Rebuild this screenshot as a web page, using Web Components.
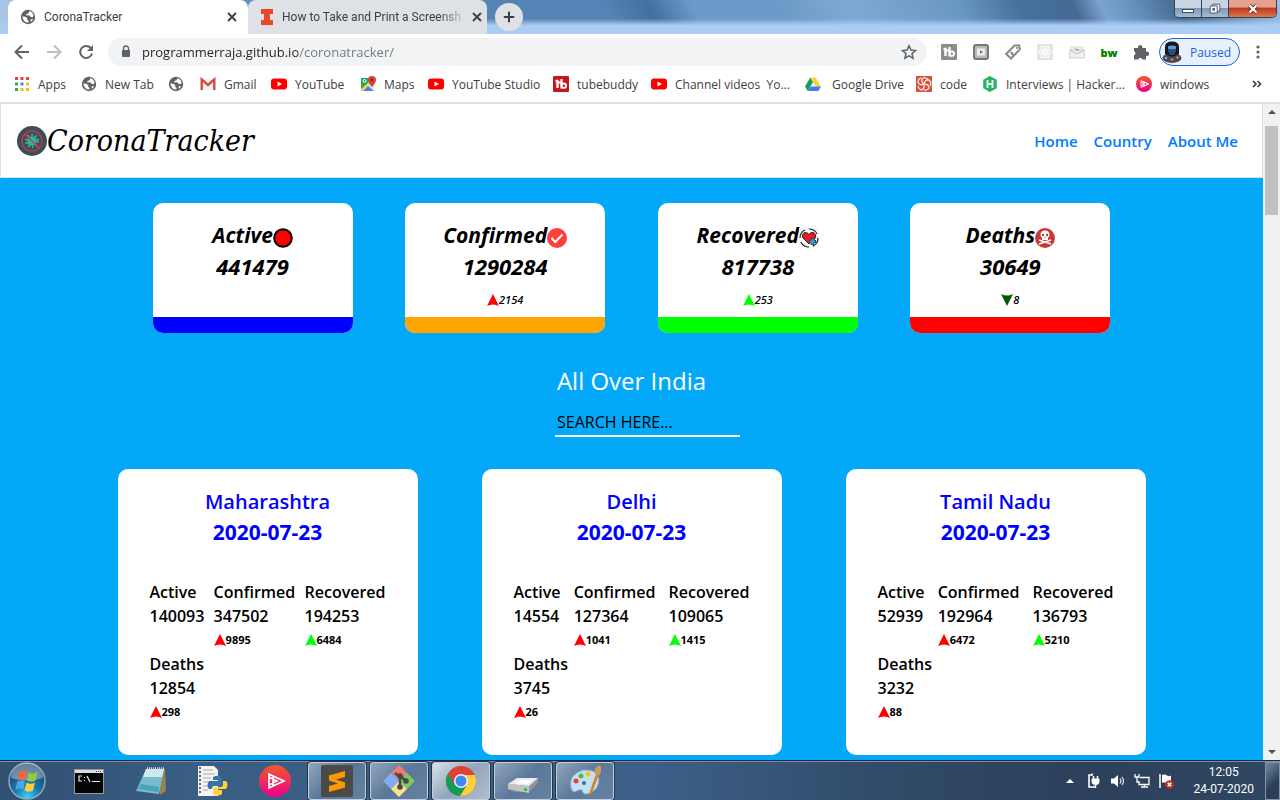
<!DOCTYPE html>
<html lang="en">
<head>
<meta charset="utf-8">
<title>CoronaTracker</title>
<style>
  html, body { margin: 0; height: 100%; }
  body { font-family: "Open Sans", "Noto Sans", sans-serif; font-size: 12px; color: #3c4043; overflow: hidden; }
</style>
</head>
<body>
<desktop-screen>
  <tab-strip></tab-strip>
  <tool-bar></tool-bar>
  <bookmark-bar></bookmark-bar>
  <page-view>
    <site-header></site-header>
    <summary-row>
      <stat-card label="Active" icon="dot" total="441479" bar="#0000ff"></stat-card>
      <stat-card label="Confirmed" icon="check" total="1290284" trend="up-red" delta="2154" bar="#ffa500"></stat-card>
      <stat-card label="Recovered" icon="heart" total="817738" trend="up-green" delta="253" bar="#00ff00"></stat-card>
      <stat-card label="Deaths" icon="skull" total="30649" trend="down" delta="8" bar="#ff0000"></stat-card>
    </summary-row>
    <region-search></region-search>
    <state-list>
      <state-card name="Maharashtra" date="2020-07-23" active="140093" confirmed="347502" confirmed-up="9895" recovered="194253" recovered-up="6484" deaths="12854" deaths-up="298"></state-card>
      <state-card name="Delhi" date="2020-07-23" active="14554" confirmed="127364" confirmed-up="1041" recovered="109065" recovered-up="1415" deaths="3745" deaths-up="26"></state-card>
      <state-card name="Tamil Nadu" date="2020-07-23" active="52939" confirmed="192964" confirmed-up="6472" recovered="136793" recovered-up="5210" deaths="3232" deaths-up="88"></state-card>
    </state-list>
  </page-view>
  <task-bar></task-bar>
</desktop-screen>

<script>
const yt = '<rect y="2.500" width="16" height="11" rx="3" fill="#f00"/><path d="M6.500 5.500v5L11 8z" fill="#fff"/>';
const tb = c => `<rect width="16" height="16" rx="1" fill="${c}"/><path d="M2.500 5h2v7" fill="none" stroke="#fff" stroke-width="2.400"/><path d="M8.500 3v9.500M5 6.500h3" stroke="#fff" stroke-width="2.200"/><circle cx="10.800" cy="9.700" r="2.200" fill="none" stroke="#fff" stroke-width="1.900"/>`;
const trend = c => `<path d="M6 0L12 12Q6 9 0 12z" fill="${c}"/>`;
// name: [viewBox, markup]
const ICONS = {
  globe: ['0 0 16 16', '<circle cx="8" cy="8" r="7.200" fill="#5f6368"/><path d="M2.200 7.500l3.300.3 2 1.700-.4 1.500 1.400.8v1.700q-5 .3-6.300-6zM9.300 2.100q3.600 1 4.400 4.700l-1.200 1.400-2.200-.4-1-1.500-2.800.1-.2-1.400 2.400-.8zM10.500 10.500l2.600-.5q-.8 2-2.200 2.700z" fill="#fff"/>'],
  illinois: ['0 0 14 16', '<path d="M1 0h12v5h-3v6h3v5H1v-5h3V5H1z" fill="#e84a27"/>'],
  close: ['0 0 16 16', '<path d="M4 4l8 8M12 4l-8 8" stroke="#3c4043" stroke-width="1.900"/>'],
  plus: ['0 0 16 16', '<path d="M8 2v12M2 8h12" stroke="#3c4043" stroke-width="2.300"/>'],
  back: ['0 0 16 16', '<path d="M15 8H2M8 1.500L1.500 8L8 14.500" fill="none" stroke="#5f6368" stroke-width="2"/>'],
  forward: ['0 0 16 16', '<path d="M1 8h13M8 1.500L14.500 8L8 14.500" fill="none" stroke="#bdbfc1" stroke-width="2"/>'],
  reload: ['0 0 16 16', '<path d="M12.700 4A6 6 0 1 0 14 9.500" fill="none" stroke="#5f6368" stroke-width="2"/><path d="M15 1v6H9z" fill="#5f6368"/>'],
  lock: ['0 0 16 16', '<rect x="4" y="6" width="8" height="7" rx="1" fill="#5f6368"/><path d="M5.500 7V4.500a2.500 2.500 0 0 1 5 0V7" fill="none" stroke="#5f6368" stroke-width="1.400"/>'],
  star: ['0 0 16 16', '<path d="M8 1.800l1.900 4.300 4.600.4-3.500 3.100 1.100 4.600L8 11.800l-4.100 2.400L5 9.600 1.500 6.500l4.600-.4z" fill="none" stroke="#5f6368" stroke-width="1.500"/>'],
  tbgray: ['0 0 16 16', tb('#8c8c8c')],
  tbred: ['0 0 16 16', tb('#c4161c')],
  player: ['0 0 16 16', '<rect x="1" y="1" width="14" height="14" rx="2" fill="#b9b9b9" stroke="#777" stroke-width="2"/><rect x="4" y="4.500" width="8" height="7" fill="#eee"/><path d="M7 6v4l3-2z" fill="#777"/>'],
  tag: ['0 0 16 16', '<path d="M9.500 1.500l4.500-.3 1 4L6 14.500 1.200 10z" fill="#fff" stroke="#8a8a8a" stroke-width="2"/><circle cx="12" cy="4" r="1" fill="#777"/><path d="M5.500 8l3 3M7.500 8L6.500 11" stroke="#888" stroke-width="1.600"/>'],
  react: ['0 0 16 16', '<rect width="16" height="16" fill="#e3e3e3"/><g fill="none" stroke="#fff"><ellipse cx="8" cy="8" rx="6.500" ry="2.500"/><ellipse cx="8" cy="8" rx="6.500" ry="2.500" transform="rotate(60 8 8)"/><ellipse cx="8" cy="8" rx="6.500" ry="2.500" transform="rotate(120 8 8)"/></g><circle cx="8" cy="8" r="1.500" fill="#fff"/>'],
  mail: ['0 0 16 16', '<path d="M2 3h12v4H2z" fill="#eee" stroke="#ddd"/><path d="M.5 6h15v8H.5z" fill="#f0f0f0" stroke="#d4d4d4"/><path d="M1 6l7 4 7-4" fill="none" stroke="#bbb"/><path d="M6 5l4 1.500" stroke="#aaa" stroke-width="1.500"/>'],
  puzzle: ['0 0 16 16', '<path d="M1 4h4.200a2.200 2.200 0 1 1 4 0H13v3.800a2.200 2.200 0 1 1 0 4V15.500H9.300a2.200 2.200 0 0 0-4.100 0H1v-4.200a2.100 2.100 0 0 0 0-4z" fill="#5f6368"/>'],
  avatar: ['0 0 20 22', '<ellipse cx="10" cy="17" rx="9.500" ry="5" fill="#4b4858"/><path d="M3 13V6q0-5.500 7-5.500T17 6v7l-7 3z" fill="#15171f"/><path d="M6 5q4-2 8 0v5l-2 4H8l-2-4z" fill="#2c4f7d"/><rect x="6" y="5" width="8" height="3" rx="1" fill="#5e9ad2"/><circle cx="4" cy="17" r="1.300" fill="#9aa"/><circle cx="10" cy="18.500" r="1.300" fill="#e78a2b"/><circle cx="15.500" cy="16.500" r="1.200" fill="#e78a2b"/>'],
  dots: ['0 0 16 16', '<g fill="#5f6368"><circle cx="8" cy="3" r="1.600"/><circle cx="8" cy="8" r="1.600"/><circle cx="8" cy="13" r="1.600"/></g>'],
  apps: ['0 0 16 16', '<path d="M1 1h3v3H1zM6.500 1h3v3h-3zM12 1h3v3h-3z" fill="#ea4335"/><path d="M1 6.500h3v3H1z" fill="#34a853"/><path d="M6.500 6.500h3v3h-3z" fill="#4285f4"/><path d="M12 6.500h3v3h-3zM6.500 12h3v3h-3zM12 12h3v3h-3z" fill="#fbbc04"/><path d="M1 12h3v3H1z" fill="#34a853"/>'],
  gmail: ['0 0 16 16', '<path d="M1 2.500h14v11H1z" fill="#f1f1f1"/><path d="M1.700 14V3.500L8 9l6.300-5.500V14" fill="none" stroke="#d54b3d" stroke-width="2.400"/>'],
  yt: ['0 0 16 16', yt],
  maps: ['0 0 16 16', '<rect x="1" y="2" width="13" height="13" rx="1" fill="#dfe4e6"/><path d="M1 2h9v4L1 14z" fill="#1fa463"/><path d="M3 15l5-5 6 5z" fill="#4285f4"/><path d="M1 13L11 4l1 2L2.500 15H1z" fill="#fdd04a"/><circle cx="4.500" cy="5" r="1.500" fill="none" stroke="#fff"/><path d="M12 11Q8 6.500 8 4a4 4 0 0 1 8 0q0 2.500-4 7z" fill="#db4437"/><circle cx="12" cy="4" r="1.400" fill="#7b231c"/>'],
  drive: ['0 0 16 16', '<path d="M5.300 1.500L0 10.500l2.700 4.500L8 6z" fill="#11a05c"/><path d="M5.300 1.500h5.300l5.400 9h-5.300z" fill="#ffce44"/><path d="M5.400 10.500H16L13.300 15H2.700z" fill="#3f7fe8"/>'],
  code: ['0 0 16 16', '<rect width="16" height="16" fill="#d9513f"/><g fill="none" stroke="#fff" stroke-width="1.100"><path d="M8 8Q4 5 7 2q4-1 5 2"/><path d="M8 8Q9 3 13 4q3 3 1 6"/><path d="M8 8q5 0 5 4-2 3-5 2"/><path d="M8 8q1 5-3 6-3-2-3-4"/><path d="M8 8q-5 2-6-2 0-3 3-4"/></g>'],
  hacker: ['0 0 16 16', '<path d="M8 0l6.800 3.800v8.400L8 16l-6.800-3.800V3.800z" fill="#27b562"/><path d="M5.500 4v8M10.500 4v8M5.500 8h5" stroke="#fff" stroke-width="1.800"/>'],
  plural: ['0 0 32 32', '<linearGradient id="p" x2="0" y2="1"><stop stop-color="#f05a28"/><stop offset="1" stop-color="#ec008c"/></linearGradient><circle cx="16" cy="16" r="16" fill="url(#p)"/><path d="M10 9v14l15-7zM14 11v10l11-5zM10 12l8 4-8 4" fill="none" stroke="#fff" stroke-width="1.700"/>'],
  virus: ['0 0 30 30', '<circle cx="15" cy="15" r="15" fill="#3e4d57"/><circle cx="15" cy="15" r="4.500" fill="#2fb8a1"/><circle cx="15" cy="15" r="5.500" fill="none" stroke="#2fb8a1" stroke-width="3" stroke-dasharray="1.600 1.900"/><circle cx="15" cy="15" r="10" fill="none" stroke="#d33c4a" stroke-width="1.200"/><path d="M8 8l14 14" stroke="#d33c4a" stroke-width="1.500"/>'],
  dot: ['0 0 20 20', '<circle cx="10" cy="10" r="8.800" fill="#f00" stroke="#000" stroke-width="2"/>'],
  check: ['0 0 20 20', '<circle cx="10" cy="10" r="10" fill="#ff3e3e"/><path d="M4.500 10l3.700 4 7.300-7.500" fill="none" stroke="#fff" stroke-width="2"/>'],
  heart: ['0 0 20 20', '<rect width="20" height="20" fill="#f7f7f7"/><circle cx="10" cy="10" r="9" fill="none" stroke="#222" stroke-width="1.200" stroke-dasharray="10 4"/><path d="M10 16L4 10Q2.500 5.500 6 4.500q2.500 0 4 2 1.500-2.500 4.500-2 3.500 2 1.500 6z" fill="#ed1c24" stroke="#222"/><path d="M13.500 10v7M10 13.500h7" stroke="#222" stroke-width="3.200"/><path d="M13.500 10.500v6M10.500 13.500h6" stroke="#29a9e0" stroke-width="2"/>'],
  skull: ['0 0 20 20', '<circle cx="10" cy="10" r="10" fill="#c83a3a"/><path d="M4 12l12 4M16 12l-12 4" stroke="#fff" stroke-width="1.500"/><path d="M5.500 7q0-4.500 4.500-4.500T14.500 7q0 2-1.500 2.700V12H7V9.700Q5.500 9 5.500 7z" fill="#fff"/><circle cx="8" cy="7" r="1.200" fill="#c83a3a"/><circle cx="12" cy="7" r="1.200" fill="#c83a3a"/><path d="M10 8.500l.8 1.500H9.200z" fill="#c83a3a"/>'],
  'up-red': ['0 0 12 12', trend('#ff0000')],
  'up-green': ['0 0 12 12', trend('#00ff00')],
  down: ['0 0 12 12', '<path d="M6 12L0 0Q6 3 12 0z" fill="#005a00"/>'],
  start: ['0 0 38 38', '<radialGradient id="o" cy=".95" r=".9"><stop stop-color="#39d3f5"/><stop offset=".4" stop-color="#1879b4"/><stop offset="1" stop-color="#1a3c60"/></radialGradient><circle cx="19" cy="19" r="18" fill="url(#o)" stroke="#90a9bd" stroke-width="1.500"/><path d="M3 16a16 15 0 0 1 32 0q-16 5-32 0z" fill="#fff" opacity=".35"/><path d="M11 10q4-3 8-.500l-1.500 8.500q-4-2-8 .5z" fill="#ef6a32"/><path d="M20.500 10.500q4 2.500 9-.5l-2 8.500q-4 2.500-8.500 0z" fill="#93c843"/><path d="M9 20q4-2.500 8-.500l-1.500 8q-4-2-8 .5z" fill="#4da4e8"/><path d="M18.500 20.500q4 2.500 8.500 0l-2 8q-4 2.500-8.500 0z" fill="#fdce3b"/>'],
  cmd: ['0 0 32 32', '<rect x="1.500" y="4.500" width="29" height="24" fill="#050505" stroke="#999"/><path d="M2 5h28v3H2z" fill="#ddd"/><path d="M23 6.500h6" stroke="#457" stroke-dasharray="1 1"/><path d="M9 11H6v5h3M11.500 12v1M11.500 15v1M14 11l3 6M19 16.500h8" fill="none" stroke="#eee" stroke-width="1.200"/>'],
  notepad: ['0 0 32 32', '<path d="M24 4h6l1 22-6 4z" fill="#9a8350"/><path d="M11 4h18l-5 25L1 26z" fill="#79bccb"/><path d="M11 4h18l-2 8H8z" fill="#cfe8ec"/><path d="M3 24l20 3 1-5L6 19z" fill="#4aa3b8"/><path d="M12 3.500h18" stroke="#ddd" stroke-width="2.500" stroke-dasharray="1 1"/>'],
  python: ['0 0 32 32', '<path d="M1 1h16l4 4v26H1z" fill="#f4f4f4"/><path d="M3 2v28" stroke="#333" stroke-width="1.500" stroke-dasharray="2 2"/><path d="M6 5h10M6 9h12M6 13h8M6 17h5M6 21h6M6 25h5" stroke="#aaa"/><path d="M16 12q5-2.500 9 0v7q0 2-2 2h-6q-2 0-2 3h-3q-3-4 0-8h9v-1h-5z" fill="#3572a5"/><path d="M26 16h3q3 3.500 0 8h-9v1h5v4q-4 3-9 0v-4q0-3 3-3h5q2 0 2-3z" fill="#ffd43b"/>'],
  sublime: ['0 0 32 32', '<rect width="32" height="32" rx="2" fill="#4a4a4a"/><path d="M8 10.500L24 6v6l-9 2.500 9 3v5L8 27v-6l9-2.500-9-3z" fill="#ff9800"/>'],
  gitbash: ['0 0 32 32', '<path d="M16 0l8 8-8 8-8-8z" fill="#f47777"/><path d="M8 8l8 8-8 8-8-8z" fill="#7fadf7"/><path d="M24 8l8 8-8 8-8-8z" fill="#7cc95d"/><path d="M16 16l8 8-8 8-8-8z" fill="#fbe28a"/><path d="M12 8l5 4v12M17 11l6 5" fill="none" stroke="#434b4b" stroke-width="2.500"/><circle cx="17" cy="11" r="2.800" fill="#434b4b"/><circle cx="23" cy="16" r="2.800" fill="#434b4b"/><circle cx="17" cy="22" r="2.800" fill="#434b4b"/>'],
  chrome: ['0 0 32 32', '<circle cx="16" cy="16" r="15" fill="#db4437"/><path d="M3 8.500A15 15 0 0 0 15 31l7-12-12 1z" fill="#0f9d58"/><path d="M15 31A15 15 0 0 0 29.800 10H16l6.500 9z" fill="#ffcd40"/><circle cx="16" cy="16" r="7" fill="#f1f1f1"/><circle cx="16" cy="16" r="5.500" fill="#4285f4"/>'],
  disk: ['0 0 32 32', '<path d="M1 19l9-6h21v5l-9 9H8L1 24z" fill="#8f9499"/><path d="M1 19l9-6h21l-9 8z" fill="#e9ebed"/><path d="M1 19l21 2v7L1 24z" fill="#c1c5c9"/><path d="M8 18l5-3h12l-5 4z" fill="#fff"/><rect x="17" y="23" width="3" height="3" fill="#36c836"/>'],
  paint: ['0 0 32 32', '<path d="M2 23Q-1 10 14 5q15-1 16 9 0 10-9 14-7 3-8-3-4-1-7 2-3 0-4-4z" fill="#c2e2f2" stroke="#7fb2cf"/><circle cx="7" cy="16" r="2.500" fill="#d9453d"/><circle cx="12" cy="11" r="2.500" fill="#5bb54a"/><circle cx="19" cy="9" r="2.500" fill="#f4c22b"/><circle cx="15" cy="18" r="2" fill="#3e6f95"/><path d="M27 9l-7 20 2 1 8-20z" fill="#e07f2b"/><path d="M25 8q0-6 6-8 3 5-1 11z" fill="#c89a60"/>'],
  trayup: ['0 0 16 16', '<path d="M4 10l4-4 4 4z" fill="#fff"/>'],
  battery: ['0 0 16 16', '<path d="M7 2H3v12h7M6 .5v2" fill="none" stroke="#fff" stroke-width="1.600"/><path d="M6 6h7v3q0 2.500-3.500 2.500T6 9z" fill="#fff" stroke="#fff"/><path d="M7.500 3v3M11.500 3v3M9.500 11v4" stroke="#fff" stroke-width="1.500"/>'],
  speaker: ['0 0 16 16', '<path d="M1 5.500h3L8 2v12L4 10.500H1z" fill="#fff"/><path d="M10 5.500q2 2.500 0 5M12 4q3 4 0 8" fill="none" stroke="#dfe6ee" stroke-width="1.200"/>'],
  network: ['0 0 16 16', '<path d="M6 4.500h9v7H5V8M7 14h7M10.500 12v2" fill="none" stroke="#fff" stroke-width="1.300"/><path d="M1 1v3h4V1M3 4v5h2" fill="none" stroke="#fff" stroke-width="1.300"/>'],
  flag: ['0 0 16 16', '<path d="M2 1v14" stroke="#fff" stroke-width="1.500"/><path d="M4 2q3-1 5 .5t4 0v7H4z" fill="#fff"/><circle cx="11.500" cy="11.500" r="4.200" fill="#d9251c"/><path d="M9.800 9.800l3.400 3.400M13.200 9.800l-3.400 3.400" stroke="#fff" stroke-width="1.500"/>'],
  arrowup: ['0 0 16 16', '<path d="M4 10l4-4 4 4z" fill="#505050"/>'],
  arrowdown: ['0 0 16 16', '<path d="M4 6l4 4 4-4z" fill="#505050"/>'],
  chevrons: ['0 0 16 16', '<path d="M4 5l3 3-3 3M8.500 5l3 3-3 3" fill="none" stroke="#3c4043" stroke-width="1.700"/>'],
  minimize: ['0 0 16 16', '<rect x="2.500" y="8.500" width="11" height="3" fill="#fff" stroke="#3f4a5a"/>'],
  restore: ['0 0 16 16', '<path d="M5.500 2.500h8v8h-8z" fill="#fff" stroke="#3f4a5a"/><path d="M2.500 4.500h8v8h-8z" fill="#fff" stroke="#3f4a5a"/><path d="M5.500 7.500h2v2h-2z" fill="#7c98ba" stroke="#3f4a5a"/>'],
  winclose: ['0 0 16 16', '<path d="M4 4l8 8M12 4l-8 8" stroke="#5d2d28" stroke-width="4.500"/><path d="M4 4l8 8M12 4l-8 8" stroke="#fff" stroke-width="2.600"/>'],
};

class Base extends HTMLElement {
  connectedCallback() {
    if (this.shadowRoot) return;
    this.attachShadow({ mode: 'open' }).innerHTML = `<style>
      *, :host { box-sizing: border-box; }
      button { font: inherit; color: inherit; background: none; border: 0; padding: 0; margin: 0; display: flex; align-items: center; justify-content: center; }
      a { color: inherit; text-decoration: none; }
      ${this.css()}</style>${this.html()}`;
  }
  at(name) { return this.getAttribute(name) || ''; }
}
const define = (tag, css, html) => customElements.define(tag, class extends Base {
  css() { return css; }
  html() { return html(this); }
});
const icon = (name, w = 16, h = w) => `<svg-icon name="${name}" w="${w}" h="${h}"></svg-icon>`;

customElements.define('svg-icon', class extends Base {
  css() { return `:host { display: block; flex: none; width: ${this.at('w')}px; height: ${this.at('h')}px; } svg { display: block; width: 100%; height: 100%; }`; }
  html() { const [box, body] = ICONS[this.at('name')]; return `<svg viewBox="${box}" aria-hidden="true">${body}</svg>`; }
});

define('desktop-screen', `
  :host { display: flex; flex-direction: column; height: 100vh; background: #fff; }
  ::slotted(page-view) { flex: 1; min-height: 0; }`, () => '<slot></slot>');

define('tab-strip', `
  :host { display: flex; align-items: flex-start; height: 34px; flex: none; padding-left: 8px; font-family: Roboto, "Open Sans", sans-serif;
    background: linear-gradient(to bottom, #abcdf300 55%, #abcdf3 75%), linear-gradient(65deg, #a9c6e6 0 8px, #5583b5 300px 560px, #44709f 600px, #6d9ac8 640px 720px, #7fa9d4 780px, #6b97c5 880px, #46719f 935px, #456a94 985px, #7ba3cf 1010px, #6590be 1040px, #44698f 1080px, #7ba2ca 1140px, #9dbfe2); }
  .tab { display: flex; align-items: center; gap: 8px; width: 240px; height: 34px; padding: 0 8px 0 12px; border-radius: 8px 8px 0 0; background: #fff; }
  .tab + .tab { background: #dee1e6; width: 239px; }
  .title { flex: 1; white-space: nowrap; }
  .tab + .tab .title { -webkit-mask: linear-gradient(to right, #000 88%, #0003); }
  .new { width: 28px; height: 28px; margin: 3px 0 0 8px; border-radius: 14px; background: #dee1e6; }
  .controls { display: flex; margin: 0 3px 0 auto; height: 18px; border: 1px solid #37424f; border-top: 0; border-radius: 0 0 5px 5px; overflow: hidden; }
  .controls button { width: 27px; background: linear-gradient(#c6d4e5 0 45%, #8299b4 50%, #a4bcd5); border-right: 1px solid #37424f; }
  .controls .x { width: 47px; border: 0; background: linear-gradient(#e4a192 0 40%, #c23a1d 50%, #d87954); }`,
  () => `<div class="tab">${icon('globe')}<span class="title">CoronaTracker</span><button aria-label="Close tab">${icon('close')}</button></div>
  <div class="tab">${icon('illinois', 14, 16)}<span class="title">How to Take and Print a Screensh</span><button aria-label="Close tab">${icon('close')}</button></div>
  <button class="new" aria-label="New tab">${icon('plus', 14)}</button>
  <div class="controls"><button aria-label="Minimize">${icon('minimize')}</button><button aria-label="Restore">${icon('restore', 14)}</button><button class="x" aria-label="Close">${icon('winclose', 14)}</button></div>`);

define('tool-bar', `
  :host { display: flex; align-items: center; height: 36px; flex: none; padding: 0 14px; gap: 16px; background: #fff; }
  .box { display: flex; flex: 1; align-items: center; gap: 8px; height: 28px; margin-left: -2px; margin-right: -2px; padding: 0 10px; border-radius: 14px; background: #f1f3f4; }
  input { flex: 1; min-width: 0; border: 0; outline: 0; padding: 0; font: inherit; font-size: 13px; color: #202124;
    background: linear-gradient(to right, #202124 156px, #73777b 156px); -webkit-background-clip: text; background-clip: text; -webkit-text-fill-color: transparent; }
  .bw { width: 16px; font-weight: 800; font-size: 11px; color: #008000; }
  .pill { height: 28px; width: 81px; margin: 0 -6px; padding: 0 8px 0 2px; justify-content: space-between; border: 1px solid #1a66d6; border-radius: 14px; background: #e8f0fe; color: #1967d2; }`,
  () => `<button aria-label="Back">${icon('back')}</button><button aria-label="Forward">${icon('forward')}</button><button aria-label="Reload">${icon('reload')}</button>
  <div class="box">${icon('lock')}<input aria-label="Address" value="programmerraja.github.io/coronatracker/"><button aria-label="Bookmark">${icon('star')}</button></div>
  ${['tbgray', 'player', 'tag', 'react', 'mail'].map(n => `<button aria-label="${n}">${icon(n)}</button>`).join('')}
  <button class="bw">bw</button><button aria-label="Extensions">${icon('puzzle')}</button>
  <button class="pill">${icon('avatar', 20, 22)}<span>Paused</span></button><button aria-label="Menu">${icon('dots')}</button>`);

define('bookmark-bar', `
  :host { display: grid; grid-template-columns: 67px 87px 32px 71px 89px 68px 125px 98px 154px 111px 66px 154px 1fr auto; align-items: center; height: 32px; flex: none; padding: 0 15px 4px 14px; background: #fff; }
  a { display: flex; align-items: center; gap: 8px; white-space: nowrap; }`,
  () => [['apps', 'Apps'], ['globe', 'New Tab'], ['globe', ''], ['gmail', 'Gmail'], ['yt', 'YouTube'], ['maps', 'Maps'], ['yt', 'YouTube Studio'], ['tbred', 'tubebuddy'], ['yt', 'Channel videos&nbsp; Yo...'], ['drive', '&nbsp;Google Drive'], ['code', 'code'], ['hacker', 'Interviews | Hacker...'], ['plural', 'windows']]
    .map(([i, t]) => `<a href="#">${icon(i)}${t && `<span>${t}</span>`}</a>`).join('') + `<button aria-label="More bookmarks">${icon('chevrons')}</button>`);

define('page-view', `
  :host { display: flex; border-top: 2px solid #dee1e6; }
  main { flex: 1; min-width: 0; overflow: hidden; background: #03a9f8; font-size: 16px; color: #000; }
  .scroll { display: flex; flex-direction: column; align-items: center; width: 17px; background: #f1f1f1; }
  .thumb { width: 13px; height: 89px; margin: 6px 0 auto; background: #c1c1c1; }`,
  () => `<main><slot></slot></main><div class="scroll">${icon('arrowup')}<div class="thumb"></div>${icon('arrowdown')}</div>`);

define('site-header', `
  :host { display: flex; align-items: center; justify-content: space-between; height: 74px; padding: 0 24px 0 16px; background: #fff; border: 1px solid #dee2e6; border-top: 0; }
  .brand { display: flex; align-items: center; font: italic 30px/48px "DejaVu Serif Condensed", "DejaVu Serif", serif; }
  nav { display: flex; gap: 16px; color: #007bff; font-size: 15px; font-weight: 600; }`,
  () => `<a class="brand" href="#">${icon('virus', 30)}CoronaTracker</a><nav><a href="#">Home</a><a href="#">Country</a><a href="#">About Me</a></nav>`);

define('summary-row', `
  :host { display: grid; grid-template-columns: repeat(4, 1fr); justify-items: center; width: 80%; margin: 25px auto 0; }`, () => '<slot></slot>');

define('stat-card', `
  :host { display: flex; flex-direction: column; width: 200px; height: 130px; border-radius: 10px; overflow: hidden; background: #fff; font-style: italic; text-align: center; }
  h2 { display: flex; justify-content: center; align-items: center; margin: 17px 0 0; font-size: 21px; line-height: 31px; }
  h2 svg-icon { margin-top: 4px; }
  .total { font-size: 22px; font-weight: 700; line-height: 31px; }
  .delta { display: flex; justify-content: center; align-items: center; margin-top: 10px; font-size: 11px; font-weight: 600; line-height: 16px; }
  .bar { height: 16px; margin-top: auto; }`,
  e => `<h2>${e.at('label')}${icon(e.at('icon'), 20)}</h2><div class="total">${e.at('total')}</div>
  ${e.at('delta') && `<div class="delta">${icon(e.at('trend'), 12)}${e.at('delta')}</div>`}<div class="bar" style="background:${e.at('bar')}"></div>`);

define('region-search', `
  :host { display: flex; flex-direction: column; align-items: center; margin: 30px 0 32px; }
  h2 { margin: 0; color: #fff; font-size: 24px; font-weight: 500; line-height: 36px; }
  input { width: 185px; height: 28px; margin: 10px 0 0 32px; padding: 0 2px; border: 0; border-bottom: 2px solid #fff; border-radius: 0; outline: 0; background: none; font: inherit; }
  input::placeholder { color: #000; opacity: 1; }`,
  () => `<h2>All Over India</h2><input type="search" aria-label="Search state" placeholder="SEARCH HERE...">`);

define('state-list', `
  :host { display: flex; flex-wrap: wrap; justify-content: center; gap: 32px 64px; }`, () => '<slot></slot>');

define('state-card', `
  :host { display: block; width: 300px; padding: 17px 32px 31px; border-radius: 10px; background: #fff; font-weight: 600; }
  h3 { margin: 0; color: #00f; font-size: 20px; font-weight: 600; line-height: 31px; text-align: center; }
  .date { margin-bottom: 32px; color: #00f; font-size: 21px; font-weight: 700; line-height: 31px; text-align: center; }
  .figures { display: flex; flex-wrap: wrap; justify-content: space-between; line-height: 24px; }
  .figures > div { min-height: 72px; }
  .delta { display: flex; align-items: center; font-size: 11px; font-weight: 700; }`,
  e => {
    const fig = (label, key, t) => `<div><div>${label}</div><div>${e.at(key)}</div>${t ? `<div class="delta">${icon(t, 12)}${e.at(key + '-up')}</div>` : ''}</div>`;
    return `<h3>${e.at('name')}</h3><div class="date">${e.at('date')}</div><div class="figures">${fig('Active', 'active')}${fig('Confirmed', 'confirmed', 'up-red')}${fig('Recovered', 'recovered', 'up-green')}${fig('Deaths', 'deaths', 'up-red')}</div>`;
  });

define('task-bar', `
  :host { display: flex; align-items: center; height: 40px; flex: none; padding-left: 8px; color: #fff;
    background: linear-gradient(to right, #30506f, #3a5d84 15%, #3d6089 50%, #304a68 70%, #2c405b 85%, #2f4762); border-top: 1px solid #1c2c3f; box-shadow: inset 0 1px #7891ab; }
  .apps, .tray { display: flex; align-items: center; }
  .apps { gap: 4px; margin-left: 14px; }
  .apps button { width: 58px; height: 38px; }
  .apps .open { border: 1px solid #c3cfdb; border-radius: 3px; background: linear-gradient(135deg, #ffffff70, #ffffff28 50%, #ffffff38); box-shadow: 0 0 0 1px #22364e; }
  .apps .front { background: linear-gradient(135deg, #ffffffd0, #ffffff70 50%, #ffffff98); }
  .tray { margin-left: auto; gap: 8px; }
  .clock { margin: 0 3px 0 11px; text-align: center; line-height: 17px; font-family: Roboto, "Open Sans", sans-serif; }
  .show { width: 15px; height: 38px; border: 1px solid #8195a9; background: linear-gradient(135deg, #7189a0, #2b4058 60%); }`,
  () => `<button aria-label="Start">${icon('start', 38)}</button><div class="apps">
  ${['cmd', 'notepad', 'python', 'plural'].map(n => `<button aria-label="${n}">${icon(n, 32)}</button>`).join('')}
  ${['sublime', 'gitbash', 'chrome', 'disk', 'paint'].map(n => `<button class="open${n === 'chrome' ? ' front' : ''}" aria-label="${n}">${icon(n, 32)}</button>`).join('')}</div>
  <div class="tray">${['trayup', 'battery', 'speaker', 'network', 'flag'].map(n => `<button aria-label="${n}">${icon(n)}</button>`).join('')}
  <div class="clock"><div>12:05</div><div>24-07-2020</div></div><button class="show" aria-label="Show desktop"></button></div>`);
</script>
</body>
</html>
